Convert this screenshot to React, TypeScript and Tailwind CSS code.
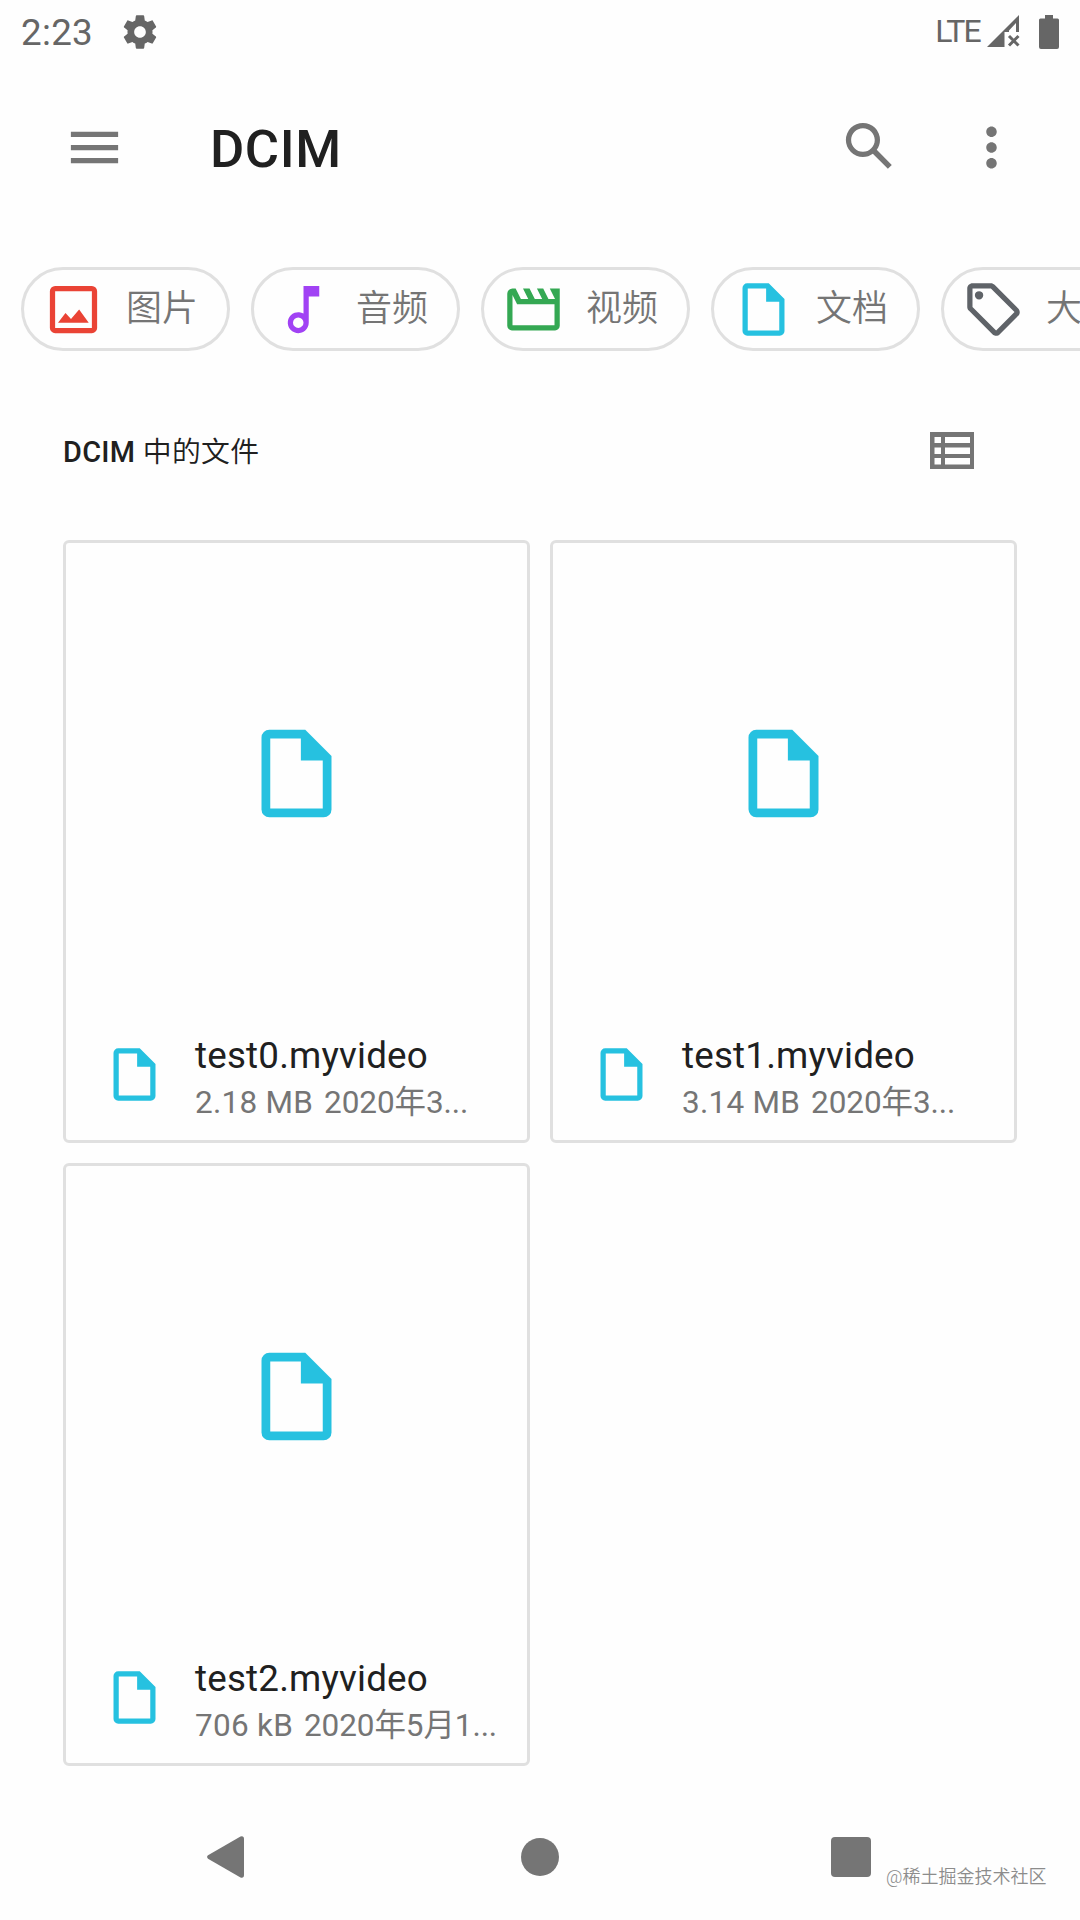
import React from 'react';

type IconProps = {
  className?: string;
};

type FileItem = {
  name: string;
  size: string;
  date: string;
};

const files: FileItem[] = [
  { name: 'test0.myvideo', size: '2.18 MB', date: '2020年3...' },
  { name: 'test1.myvideo', size: '3.14 MB', date: '2020年3...' },
  { name: 'test2.myvideo', size: '706 kB', date: '2020年5月1...' }
];

const chips: Array<[string, React.ComponentType<IconProps>, string]> = [
  ['图片', ImageIcon, 'text-[#ea4335]'],
  ['音频', AudioIcon, 'text-[#a142f4]'],
  ['视频', VideoIcon, 'text-[#34a853]'],
  ['文档', DocIcon, 'text-[#26c1e0]'],
  ['大', TagIcon, 'text-[#5f6368]']
];

function Icon({ className, d }: IconProps & { d: string }) {
  return (
    <svg viewBox="0 0 24 24" fill="currentColor" className={`shrink-0 ${className ?? ''}`}>
      <path fillRule="evenodd" d={d} />
    </svg>
  );
}

function ImageIcon({ className }: IconProps) {
  return (
    <Icon
      className={className}
      d="M19 3H5a2 2 0 0 0-2 2v14a2 2 0 0 0 2 2h14a2 2 0 0 0 2-2V5a2 2 0 0 0-2-2zM19 19H5V5h14zM14.15 12l-3.1 3.65-2.1-2.3L6.1 17h11.7z"
    />
  );
}

function AudioIcon({ className }: IconProps) {
  return (
    <Icon
      className={className}
      d="M12 3v10.55A4 4 0 1 0 14 17V7h4V3h-6zM10 19a2 2 0 1 1 0-4 2 2 0 0 1 0 4z"
    />
  );
}

function VideoIcon({ className }: IconProps) {
  return (
    <Icon
      className={className}
      d="M4 4h1.2l2 4H10L8 4h2.5l2 4h2.8l-2-4h2.4l2 4h2.5l-2-4H22v14.2a1.8 1.8 0 0 1-1.8 1.8H3.8A1.8 1.8 0 0 1 2 18.200V6a2 2 0 0 1 2-2zM4 18h16v-8H5.760L4 6.470z"
    />
  );
}

function DocIcon({ className }: IconProps) {
  return (
    <Icon
      className={className}
      d="M14 2H5.8A1.8 1.8 0 0 0 4 3.8v16.4A1.8 1.8 0 0 0 5.8 22h12.4a1.8 1.8 0 0 0 1.8-1.8V8zM18 20H6V4h7v5h5z"
    />
  );
}

function TagIcon({ className }: IconProps) {
  return (
    <Icon
      className={className}
      d="M21.41 11.58l-9-9C12.05 2.22 11.55 2 11 2H4c-1.1 0-2 .9-2 2v7c0 .55.22 1.05.59 1.42l9 9c.36.36.86.58 1.41.58s1.05-.22 1.41-.59l7-7c.37-.36.59-.86.59-1.41s-.23-1.06-.59-1.42zM13 20.01L4 11V4h7v-.01l9 9-7 7.02zM8.1 6.6A1.6 1.6 0 1 1 4.9 6.6 1.6 1.6 0 0 1 8.1 6.6z"
    />
  );
}

function StatusBar() {
  return (
    <div className="flex h-[63px] items-center pl-[21px] pr-[21px] text-[#666666]">
      <span className="w-[99px] pt-1 text-[36.75px] leading-none tracking-[0.3px]">2:23</span>
      <Icon
        className="size-10"
        d="M19.43 12.98c.04-.32.07-.64.07-.98s-.03-.66-.07-.98l2.11-1.65c.19-.15.24-.42.12-.64l-2-3.46c-.12-.22-.39-.3-.61-.22l-2.49 1c-.52-.4-1.08-.73-1.69-.98l-.38-2.65C14.46 2.18 14.25 2 14 2h-4c-.25 0-.46.18-.49.42l-.38 2.65c-.61.25-1.17.59-1.69.98l-2.49-1c-.23-.09-.49 0-.61.22l-2 3.46c-.13.22-.07.49.12.64l2.11 1.65c-.04.32-.07.65-.07.98s.03.66.07.98l-2.11 1.65c-.19.15-.24.42-.12.64l2 3.46c.12.22.39.3.61.22l2.49-1c.52.4 1.08.73 1.69.98l.38 2.65c.03.24.24.42.49.42h4c.25 0 .46-.18.49-.42l.38-2.65c.61-.25 1.17-.59 1.69-.98l2.49 1c.23.09.49 0 .61-.22l2-3.46c.12-.22.07-.49-.12-.64l-2.11-1.65zM12 15.5c-1.93 0-3.5-1.57-3.5-3.5s1.57-3.5 3.5-3.5 3.5 1.57 3.5 3.5-1.57 3.5-3.5 3.5z"
      />
      <span className="ml-auto pb-0.5 text-[32px] leading-none tracking-[-1.8px]">LTE</span>
      <svg viewBox="0 0 33 33" fill="currentColor" className="ml-[7px] h-[33px] w-[33px]">
        <path d="M0 32L32 0V17H29V8L22 15.5V17H17.5V32z" />
        <path d="M22 21L31.5 30.5M31.5 21L22 30.5" stroke="currentColor" strokeWidth="3" />
      </svg>
      <svg viewBox="0 0 20 34" fill="currentColor" className="ml-[19px] h-[34px] w-5">
        <path d="M6 0h8v3.5h4.5a1.5 1.5 0 0 1 1.5 1.5v27a2 2 0 0 1-2 2H2a2 2 0 0 1-2-2V5a1.5 1.5 0 0 1 1.5-1.5H6z" />
      </svg>
    </div>
  );
}

function AppBar() {
  return (
    <header className="flex h-[168px] items-center pl-[63px] pr-[57px] text-[#757575]">
      <Icon className="size-[63px]" d="M3 18h18v-2H3v2zm0-5h18v-2H3v2zm0-7v2h18V6H3z" />
      <h1 className="ml-[84px] pt-[4px] text-[52.5px] font-medium leading-none tracking-[0.6px] text-[#202020]">DCIM</h1>
      <Icon
        className="mb-0.5 ml-auto size-[63px]"
        d="M20.49 19l-5.73-5.73C15.53 12.2 16 10.91 16 9.5A6.5 6.5 0 1 0 9.5 16c1.41 0 2.7-.47 3.77-1.24L19 20.49 20.49 19zM5 9.5C5 7.01 7.01 5 9.5 5S14 7.01 14 9.5 11.99 14 9.5 14 5 11.99 5 9.5z"
      />
      <Icon
        className="ml-[59px] size-[63px]"
        d="M12 8c1.1 0 2-.9 2-2s-.9-2-2-2-2 .9-2 2 .9 2 2 2zm0 2c-1.1 0-2 .9-2 2s.9 2 2 2 2-.9 2-2-.9-2-2-2zm0 6c-1.1 0-2 .9-2 2s.9 2 2 2 2-.9 2-2-.9-2-2-2z"
      />
    </header>
  );
}

function FileCard({ name, size, date }: FileItem) {
  return (
    <div className="flex h-[603px] flex-col rounded-md border-[3px] border-[#e0e0e0]">
      <div className="flex h-[460px] items-center justify-center">
        <DocIcon className="size-[105px] text-[#26c1e0]" />
      </div>
      <div className="flex h-[137px] items-center pl-[37px] pt-[6px]">
        <DocIcon className="size-[63px] text-[#26c1e0]" />
        <div className="ml-[29px] whitespace-nowrap pt-[10px]">
          <div className="text-[36.75px] leading-[46px] tracking-[0.2px] text-[#202020]">{name}</div>
          <div className="flex gap-[11px] text-[31.5px] leading-[47px] text-[#757575]">
            <span className="tracking-[0.25px]">{size}</span>
            <span className="tracking-[-0.1px]">{date}</span>
          </div>
        </div>
      </div>
    </div>
  );
}

export default function App() {
  return (
    <div className="flex h-[1920px] w-[1080px] flex-col overflow-hidden bg-[#fefefe] font-['Roboto','Noto_Sans_CJK_SC',sans-serif]">
      <StatusBar />
      <AppBar />

      <div className="mt-9 flex gap-[21px] overflow-hidden pl-[21px]">
        {chips.map(([label, ChipIcon, color]) => (
          <div
            key={label}
            className="flex h-[84px] w-[209px] shrink-0 items-center rounded-full border-[3px] border-[#e0e0e0] pl-[18px]"
          >
            <ChipIcon className={`size-[63px] ${color}`} />
            <span className="ml-[21px] whitespace-nowrap text-[36px] font-[350] leading-none text-[#757575]">{label}</span>
          </div>
        ))}
      </div>

      <div className="flex h-[189px] items-center justify-between pl-[63px] pr-[106px] pt-[10px]">
        <h2 className="pt-1 text-[28.875px] font-medium leading-none tracking-[0.3px] text-[#202020]">
          DCIM <span className="font-[350]">中的文件</span>
        </h2>
        <svg viewBox="0 0 44 37" className="h-[37px] w-11 text-[#757575]" fill="currentColor">
          <path
            fillRule="evenodd"
            d="M0 0h44v37H0zM4.5 5h6.5v6H4.5zM15 5h25v6H15zM4.5 15.5h6.5v6.5H4.5zM15 15.5h25v6.5H15zM4.5 26h6.5v6.5H4.5zM15 26h25v6.5H15z"
          />
        </svg>
      </div>

      <div className="grid grid-cols-2 gap-5 px-[63px]">
        {files.map((file) => (
          <FileCard key={file.name} {...file} />
        ))}
      </div>

      <nav className="flex flex-1 items-center pl-[207px] pt-7 text-[#757575]">
        <svg viewBox="0 0 37 42" fill="currentColor" className="h-[42px] w-[37px]">
          <path d="M1 19.3L33.5.4Q37-.5 37 3V39Q37 42.5 33.5 41.6L1 22.7Q-.8 21 1 19.3z" />
        </svg>
        <div className="ml-[277px] size-[38px] rounded-full bg-[#757575]" />
        <div className="ml-[272px] size-10 rounded bg-[#757575]" />
        <span className="ml-[15px] mt-[39px] whitespace-nowrap text-[18px] font-[350] leading-none text-[#8c8c8c]">
          @稀土掘金技术社区
        </span>
      </nav>
    </div>
  );
}
